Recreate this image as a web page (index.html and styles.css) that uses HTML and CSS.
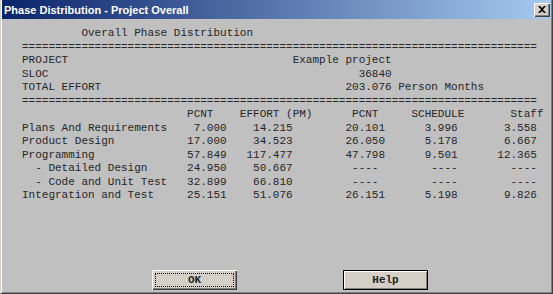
FILE: index.html
```html
<html lang="en"><head>
    <meta charset="UTF-8">
    <title>Phase Distribution - Project Overall</title>
    <link rel="stylesheet" href="styles.css">
</head>
<body>
    <div class="window">
        <div class="titlebar">
            <span class="title">Phase Distribution - Project Overall</span>
            <span class="close"><svg width="8" height="7" viewBox="0 0 8 7"><path d="M0 0h2l2 2 2-2h2L5 3.5 8 7H6L4 5 2 7H0l3-3.5z" fill="#000"/></svg></span>
        </div>
        <div class="panel">
<pre class="report">         Overall Phase Distribution
==============================================================================
PROJECT                                  Example project
SLOC                                               36840
TOTAL EFFORT                                     203.076 Person Months
==============================================================================
                         PCNT    EFFORT (PM)      PCNT     SCHEDULE       Staff
Plans And Requirements    7.000    14.215        20.101      3.996       3.558
Product Design           17.000    34.523        26.050      5.178       6.667
Programming              57.849   117.477        47.798      9.501      12.365
  - Detailed Design      24.950    50.667         ----        ----        ----
  - Code and Unit Test   32.899    66.810         ----        ----        ----
Integration and Test     25.151    51.076        26.151      5.198       9.826</pre>
            <div class="buttons">
                <button class="btn btn_focus">OK</button>
                <button class="btn btn_default">Help</button>
            </div>
        </div>
    </div>
</body></html>
```

FILE: styles.css
```css
body {
    margin: 0;
    background: #c0c0c0;
}
.window {
    width: 553px;
    height: 294px;
    box-sizing: border-box;
    display: flex;
    flex-direction: column;
    background: #c0c0c0;
    border-left: 1px solid #d4d0c8;
    border-right: 1px solid #404040;
    border-bottom: 1px solid #404040;
    box-shadow: inset 1px 0 #fff, inset -1px -1px #808080;
    padding: 0 1px 1px 1px;
}
.titlebar {
    height: 19px;
    display: flex;
    align-items: center;
    justify-content: space-between;
    background: linear-gradient(to right, #0a246a, #a6caf0);
    padding: 0 1px 0 2px;
}
.title {
    color: #fff;
    font-family: "Liberation Sans", Arial, sans-serif;
    font-weight: bold;
    font-size: 11px;
}
.close {
    width: 16px;
    height: 14px;
    display: flex;
    align-items: center;
    justify-content: center;
    background: #d4d0c8;
    box-shadow: inset 1px 1px #fff, inset -1px -1px #404040, inset -2px -2px #808080;
}
.panel {
    flex: 1;
    display: flex;
    flex-direction: column;
    padding: 8px 0 2px 20px;
}
.report {
    margin: 0;
    font-family: "Liberation Mono", "Courier New", monospace;
    font-size: 11px;
    line-height: 13.5px;
    color: #262626;
}
.buttons {
    margin-top: auto;
    display: flex;
    gap: 106px;
    padding-left: 130px;
}
.btn {
    width: 85px;
    height: 20px;
    box-sizing: border-box;
    padding: 0;
    background: #d4d0c8;
    font-family: "Liberation Mono", "Courier New", monospace;
    font-weight: bold;
    font-size: 11px;
    color: #222;
}
.btn_focus {
    border: none;
    box-shadow: inset 1px 1px #fff, inset -1px -1px #404040, inset -2px -2px #808080;
    outline: 1px dotted #000;
    outline-offset: -4px;
}
.btn_default {
    border: 1px solid #000;
    box-shadow: inset 1px 1px #fff, inset -1px -1px #808080;
}
```
